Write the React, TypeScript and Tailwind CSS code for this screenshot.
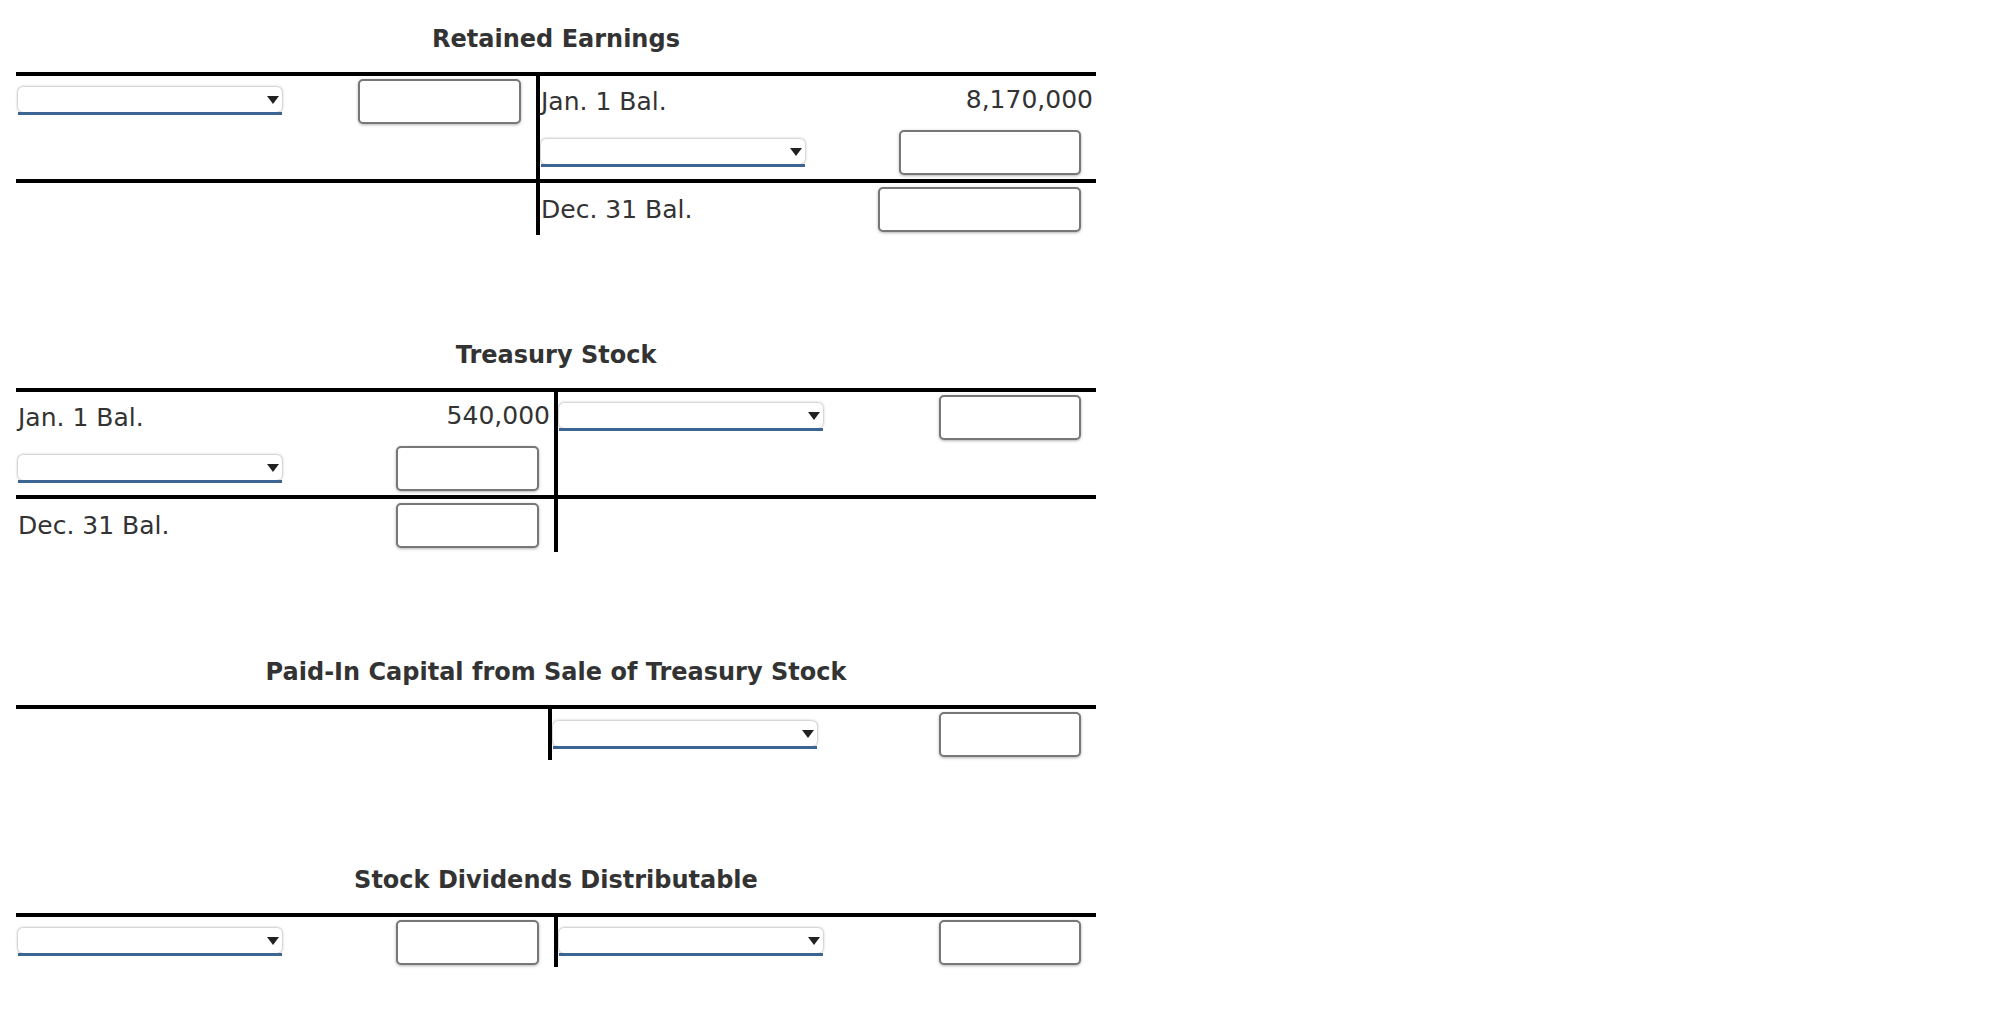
import React from "react";

type Cell = React.ReactNode;

function Dropdown() {
  return (
    <div className="w-[264px] flex flex-col">
      <div className="h-[25px] rounded-[5px] bg-white shadow-[0_0_3px_rgba(0,0,0,0.45)] flex items-center justify-end pr-[3px] pt-[1px]">
        <div className="w-0 h-0 border-l-[6px] border-r-[6px] border-t-[8px] border-l-transparent border-r-transparent border-t-[#222]" />
      </div>
      <div className="h-[3px] bg-[#3d6594]" />
    </div>
  );
}

function Amount({ w = "w-[143px]" }: { w?: string }) {
  return (
    <input
      type="text"
      className={`${w} h-[45px] border-2 border-[#777] rounded-[5px] bg-white shadow-[0_1px_3px_rgba(0,0,0,0.3)] outline-none`}
    />
  );
}

function Label({ children }: { children: React.ReactNode }) {
  return <span className="text-[25px] leading-none text-[#333]">{children}</span>;
}

type Row = { h: string; left: Cell; right: Cell; divider?: boolean };

function TAccount({
  title,
  leftW,
  rows,
}: {
  title: string;
  leftW: string;
  rows: Row[];
}) {
  return (
    <section className="w-[1080px] flex flex-col">
      <h2 className="h-[28px] text-center text-[24px] leading-[28px] font-bold text-[#333] mb-[19px]">
        {title}
      </h2>
      <div className="border-t-4 border-black flex flex-col">
        {rows.map((r, i) => (
          <div key={i} className={`flex ${r.divider ? "border-t-4 border-black" : ""}`}>
            <div className={`${leftW} ${r.h} shrink-0 flex items-center justify-between pl-[2px]`}>
              {r.left}
            </div>
            <div className={`flex-1 ${r.h} border-l-4 border-black flex items-center justify-between pl-[1px]`}>
              {r.right}
            </div>
          </div>
        ))}
      </div>
    </section>
  );
}

export default function App() {
  return (
    <div
      className="min-h-screen bg-white pl-[16px] pt-[25px] flex flex-col gap-[106px]"
      style={{ fontFamily: '"DejaVu Sans", Verdana, sans-serif' }}
    >
      <TAccount
        title="Retained Earnings"
        leftW="w-[520px]"
        rows={[
          {
            h: "h-[50px]",
            left: (
              <>
                <Dropdown />
                <div className="pr-[15px]">
                  <Amount w="w-[163px]" />
                </div>
              </>
            ),
            right: (
              <>
                <Label>Jan. 1 Bal.</Label>
                <span className="pr-[3px]">
                  <Label>8,170,000</Label>
                </span>
              </>
            ),
          },
          {
            h: "h-[53px]",
            left: null,
            right: (
              <>
                <Dropdown />
                <div className="pr-[15px]">
                  <Amount w="w-[182px]" />
                </div>
              </>
            ),
          },
          {
            h: "h-[52px]",
            divider: true,
            left: null,
            right: (
              <>
                <Label>Dec. 31 Bal.</Label>
                <div className="pr-[15px]">
                  <Amount w="w-[203px]" />
                </div>
              </>
            ),
          },
        ]}
      />

      <TAccount
        title="Treasury Stock"
        leftW="w-[538px]"
        rows={[
          {
            h: "h-[50px]",
            left: (
              <>
                <Label>Jan. 1 Bal.</Label>
                <span className="pr-[4px]">
                  <Label>540,000</Label>
                </span>
              </>
            ),
            right: (
              <>
                <Dropdown />
                <div className="pr-[15px]">
                  <Amount w="w-[142px]" />
                </div>
              </>
            ),
          },
          {
            h: "h-[53px]",
            left: (
              <>
                <Dropdown />
                <div className="pr-[15px]">
                  <Amount />
                </div>
              </>
            ),
            right: null,
          },
          {
            h: "h-[53px]",
            divider: true,
            left: (
              <>
                <Label>Dec. 31 Bal.</Label>
                <div className="pr-[15px]">
                  <Amount />
                </div>
              </>
            ),
            right: null,
          },
        ]}
      />

      <TAccount
        title="Paid-In Capital from Sale of Treasury Stock"
        leftW="w-[532px]"
        rows={[
          {
            h: "h-[51px]",
            left: null,
            right: (
              <>
                <Dropdown />
                <div className="pr-[15px]">
                  <Amount w="w-[142px]" />
                </div>
              </>
            ),
          },
        ]}
      />

      <TAccount
        title="Stock Dividends Distributable"
        leftW="w-[538px]"
        rows={[
          {
            h: "h-[50px]",
            left: (
              <>
                <Dropdown />
                <div className="pr-[15px]">
                  <Amount />
                </div>
              </>
            ),
            right: (
              <>
                <Dropdown />
                <div className="pr-[15px]">
                  <Amount w="w-[142px]" />
                </div>
              </>
            ),
          },
        ]}
      />
    </div>
  );
}
